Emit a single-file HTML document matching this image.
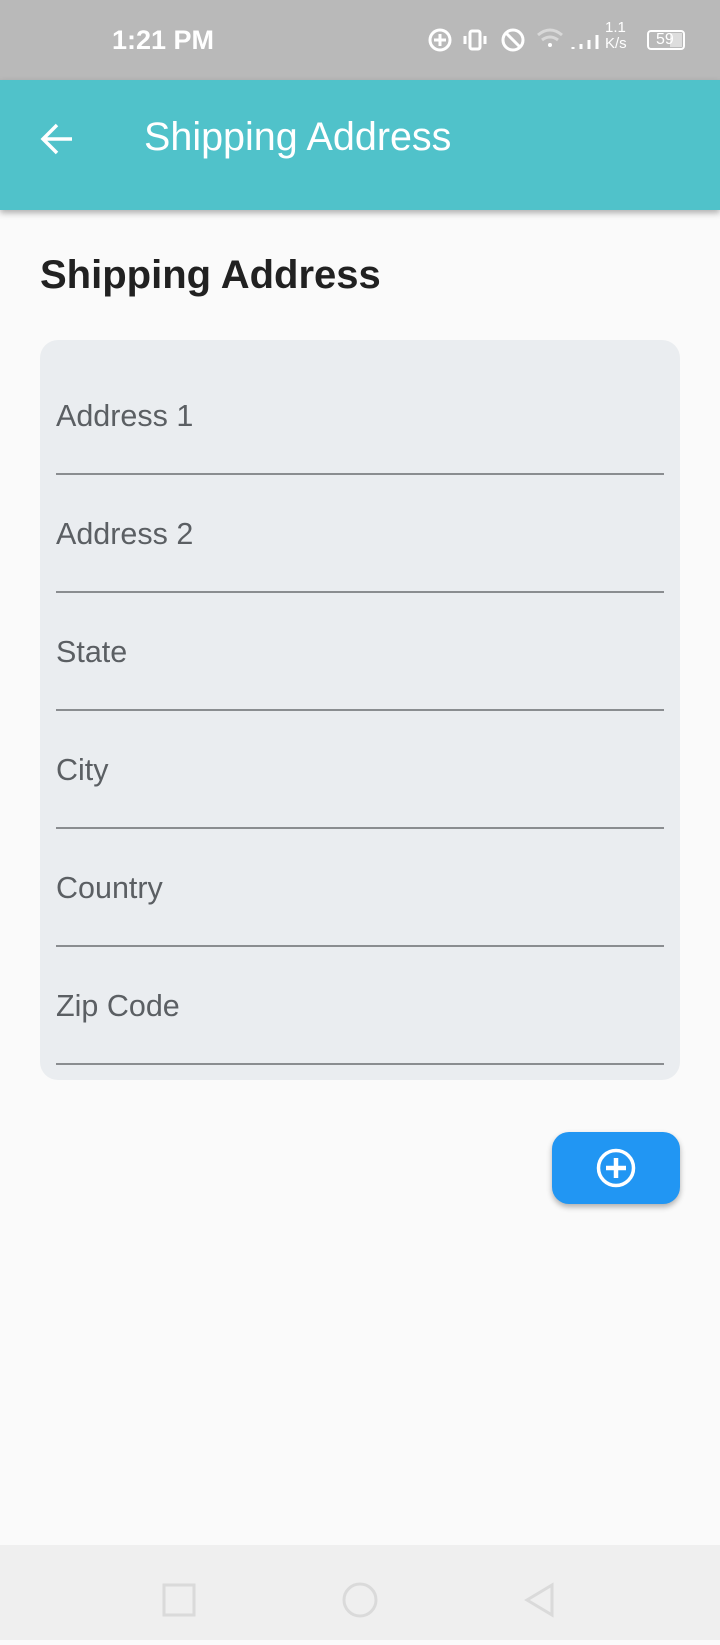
<!DOCTYPE html>
<html><head><meta charset="utf-8"><style>
*{margin:0;padding:0;box-sizing:border-box}
body{width:720px;height:1640px;background:#fafafa;font-family:"Liberation Sans",sans-serif;position:relative;overflow:hidden}
.sb{position:absolute;top:0;left:0;width:720px;height:80px;background:#b9b9b9;color:#fff}
.ab{position:absolute;top:80px;left:0;width:720px;height:130px;background:#50c2ca;box-shadow:0 3px 6px rgba(0,0,0,.3)}
.card{position:absolute;left:40px;top:340px;width:640px;height:740px;background:#eaedf0;border-radius:18px}
.lab{position:absolute;left:56px;font-size:30.5px;color:#5b5f63}
.ln{position:absolute;left:56px;width:608px;height:2px;background:#8a8d90}
.btn{position:absolute;left:552px;top:1132px;width:128px;height:72px;background:#2196f3;border-radius:17px;box-shadow:0 3px 6px rgba(0,0,0,.3)}
.nav{position:absolute;top:1545px;left:0;width:720px;height:95px;background:#efefef}
</style></head><body>
<div class="sb">
<div style="position:absolute;left:112px;top:25px;font-size:27px;font-weight:bold">1:21 PM</div>
<svg style="position:absolute;left:420px;top:20px" width="300" height="42" viewBox="0 0 300 42" fill="none" stroke="#fff" stroke-width="3">
<circle cx="20" cy="20" r="10"/><path d="M14 20h12M20 14v12"/>
<rect x="50" y="11" width="10" height="18" rx="2"/><path d="M45 16v8M65 16v8"/>
<circle cx="93" cy="20" r="10"/><path d="M86 13l14 14"/>
<path d="M118 15q12-10 24 0M122 20q8-6 16 0" stroke="#d8d8d8"/><circle cx="130" cy="25" r="2" fill="#fff" stroke="none"/>
<path d="M153 29v-2M161 29v-5M169 29v-9M177 29v-14"/>
<rect x="228" y="11" width="36" height="18" rx="3" stroke-width="2"/><rect x="250" y="13" width="12" height="14" fill="#ddd" stroke="none"/>
</svg>
<div style="position:absolute;left:605px;top:20px;font-size:15px;line-height:16px;color:#fff">1.1<br>K/s</div>
<div style="position:absolute;left:656px;top:31px;font-size:16px;color:#fff">59</div>
</div>
<div class="ab">
<svg style="position:absolute;left:38px;top:40px" width="38" height="38" viewBox="0 0 38 38" fill="none" stroke="#fff" stroke-width="3.5"><path d="M34 19H5M19 5L5 19l14 14"/></svg>
<div style="position:absolute;left:144px;top:35px;font-size:39.5px;color:#fff">Shipping Address</div>
</div>
<div style="position:absolute;left:40px;top:253px;font-size:40px;font-weight:bold;color:#212121">Shipping Address</div>
<div class="card"></div>
<div class="lab" style="top:399px">Address 1</div><div class="ln" style="top:473px"></div>
<div class="lab" style="top:517px">Address 2</div><div class="ln" style="top:591px"></div>
<div class="lab" style="top:635px">State</div><div class="ln" style="top:709px"></div>
<div class="lab" style="top:753px">City</div><div class="ln" style="top:827px"></div>
<div class="lab" style="top:871px">Country</div><div class="ln" style="top:945px"></div>
<div class="lab" style="top:989px">Zip Code</div><div class="ln" style="top:1063px"></div>
<div class="btn"><svg style="position:absolute;left:44px;top:16px" width="40" height="40" viewBox="0 0 40 40" fill="none" stroke="#fff"><circle cx="20" cy="20" r="17.5" stroke-width="3.5"/><path d="M20 10v20M10 20h20" stroke-width="4.5"/></svg></div>
<div class="nav">
<svg width="720" height="95" fill="none" stroke="#dadada" stroke-width="3"><rect x="164" y="40" width="30" height="30"/><circle cx="360" cy="55" r="16"/><path d="M552 40v30l-25-15z"/></svg>
</div>
</body></html>
